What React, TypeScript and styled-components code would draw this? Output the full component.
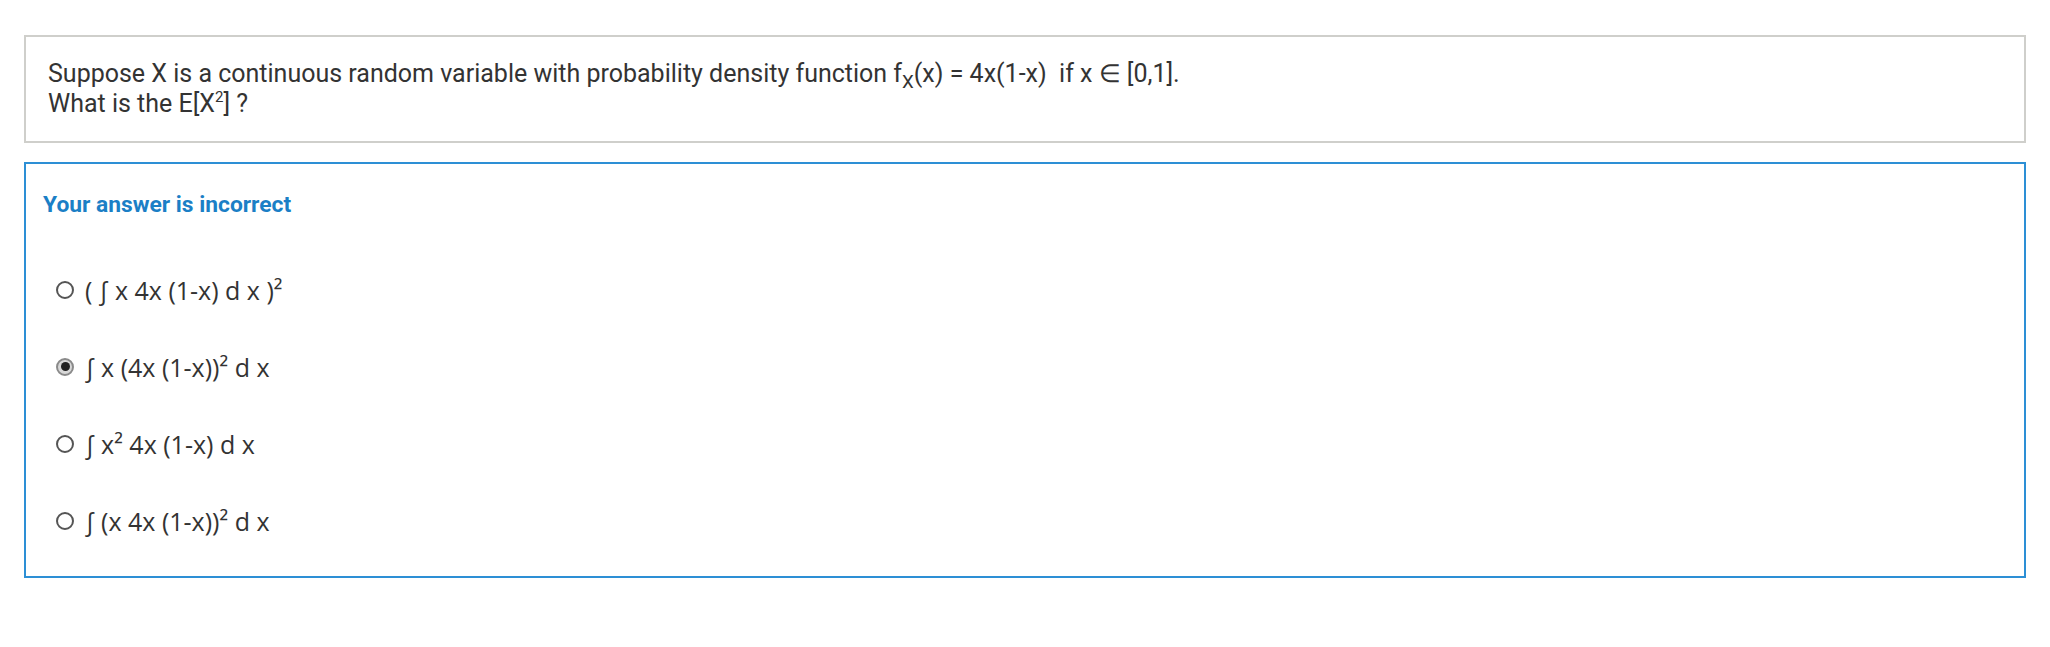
import React from 'react';
import styled, { createGlobalStyle } from 'styled-components';

const GlobalStyle = createGlobalStyle`
  html, body {
    margin: 0;
    padding: 0;
    background: #ffffff;
  }
`;

const Page = styled.div`
  display: flex;
  flex-direction: column;
  gap: 19px;
  padding: 35px 24px;
`;

const QuestionCard = styled.div`
  border: 2px solid #cfcfcb;
  padding: 22px 22px 22px;
  font-family: Roboto, "Liberation Sans", sans-serif;
  font-size: 25px;
  line-height: 30px;
  color: #333333;
`;

const Sup = styled.sup`
  font-size: 0.6em;
  line-height: 0;
  vertical-align: 0.65em;
`;

const Sub = styled.sub`
  font-size: 0.75em;
  line-height: 0;
  vertical-align: -0.3em;
`;

const FeedbackCard = styled.div`
  border: 2px solid #2d8fd5;
  padding: 28px 17px 17px;
`;

const Verdict = styled.div`
  font-family: Roboto, "Liberation Sans", sans-serif;
  font-weight: 700;
  font-size: 22.8px;
  line-height: 26px;
  color: #1b7fc6;
`;

const Options = styled.div`
  display: flex;
  flex-direction: column;
  margin-top: 33px;
`;

const OptionRow = styled.label`
  display: flex;
  align-items: center;
  gap: 11px;
  height: 77px;
  padding-left: 13px;
  font-family: "Open Sans", "Noto Sans", sans-serif;
  font-size: 25px;
  color: #333333;
`;

const Radio = styled.span<{ $checked?: boolean }>`
  box-sizing: border-box;
  width: 18px;
  height: 18px;
  border-radius: 50%;
  border: 2px solid ${p => (p.$checked ? '#8a8a8a' : '#555555')};
  background: ${p => (p.$checked ? '#d8d8d8' : '#ffffff')};
  display: flex;
  align-items: center;
  justify-content: center;
  flex-shrink: 0;

  &::after {
    content: '';
    display: ${p => (p.$checked ? 'block' : 'none')};
    width: 9px;
    height: 9px;
    border-radius: 50%;
    background: #222222;
  }
`;

const OptionText = styled.span`
  white-space: pre;
`;

const options: { content: React.ReactNode; checked?: boolean }[] = [
  { content: '( ∫ x 4x (1-x) d x )²' },
  { content: '∫ x (4x (1-x))² d x', checked: true },
  { content: '∫ x² 4x (1-x) d x' },
  { content: '∫ (x 4x (1-x))² d x' },
];

export default function App() {
  return (
    <>
      <GlobalStyle />
      <Page>
        <QuestionCard>
          Suppose X is a continuous random variable with probability density function f<Sub>X</Sub>(x) = 4x(1-x)&nbsp; if x ∈ [0,1].
          <br />
          What is the E[X<Sup>2</Sup>] ?
        </QuestionCard>
        <FeedbackCard>
          <Verdict>Your answer is incorrect</Verdict>
          <Options>
            {options.map((o, i) => (
              <OptionRow key={i}>
                <Radio $checked={o.checked} />
                <OptionText>{o.content}</OptionText>
              </OptionRow>
            ))}
          </Options>
        </FeedbackCard>
      </Page>
    </>
  );
}
